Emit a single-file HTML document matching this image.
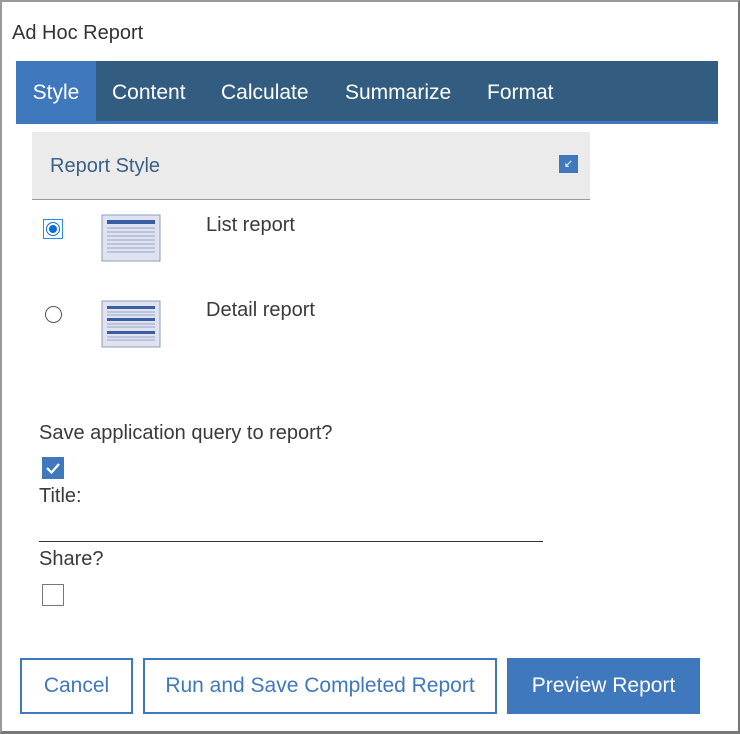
<!DOCTYPE html>
<html><head><style>
body{margin:0;width:740px;height:734px;background:#fff;font-family:"Liberation Sans",sans-serif;position:relative;overflow:hidden}
.a{position:absolute}
.frame{left:0;top:0;border-top:2px solid #9a9a9a;border-left:2px solid #9a9a9a;border-right:2px solid #777;border-bottom:3px solid #777;box-sizing:border-box;width:740px;height:734px}
.tabs{left:16px;top:61px;width:702px;height:60px;background:#325d80;border-bottom:3px solid #3f78bd}
.tab{position:absolute;top:0;height:60px;line-height:64px;color:#fff;font-size:21px}
.t{color:#3a3a3a;font-size:20px}
.btn{top:658px;height:56px;box-sizing:border-box;border:2px solid #3f78bd;color:#3f78bd;font-size:21px;text-align:center;line-height:52px}
</style></head><body>
<div class="a frame"></div>
<div class="a t" style="left:12px;top:22px;color:#333">Ad Hoc Report</div>
<div class="a tabs">
<div class="tab" style="left:0;width:80px;background:#3f78bd;text-align:center">Style</div>
<div class="tab" style="left:96px">Content</div>
<div class="tab" style="left:205px">Calculate</div>
<div class="tab" style="left:329px">Summarize</div>
<div class="tab" style="left:471px">Format</div>
</div>
<div class="a" style="left:32px;top:132px;width:558px;height:67px;background:#ebebeb;border-bottom:1px solid #999"></div>
<div class="a" style="left:50px;top:155px;color:#3b5f85;font-size:20px">Report Style</div>
<div class="a" style="left:559px;top:155px;width:19px;height:18px;background:#3f78bd;color:#fff;font-size:11px;line-height:18px;text-align:center">↙</div>
<div class="a" style="left:43px;top:219px;width:20px;height:20px;border:1px solid #2a8bea;box-sizing:border-box;background:#fff"></div>
<div class="a" style="left:46px;top:222px;width:14px;height:14px;border-radius:50%;border:1px solid #0a6cd8;box-sizing:border-box"></div>
<div class="a" style="left:49px;top:225px;width:8px;height:8px;border-radius:50%;background:#0a6cd8"></div>
<div class="a" style="left:45px;top:306px;width:17px;height:17px;border-radius:50%;border:1px solid #555;box-sizing:border-box"></div>
<svg class="a" style="left:101px;top:214px" width="62" height="50"><rect x="1" y="1" width="58" height="46" fill="#dfe3ef" stroke="#8f9cb8"/><rect x="6" y="6" width="48" height="4" fill="#3a5ea6"/><g stroke="#9aa6c8"><line x1="6" y1="14" x2="54" y2="14"/><line x1="6" y1="18" x2="54" y2="18"/><line x1="6" y1="22" x2="54" y2="22"/><line x1="6" y1="26" x2="54" y2="26"/><line x1="6" y1="30" x2="54" y2="30"/><line x1="6" y1="34" x2="54" y2="34"/><line x1="6" y1="38" x2="54" y2="38"/></g></svg>
<svg class="a" style="left:101px;top:300px" width="62" height="50"><rect x="1" y="1" width="58" height="46" fill="#dfe3ef" stroke="#8f9cb8"/><rect x="6" y="6" width="48" height="3" fill="#3a5ea6"/><rect x="6" y="18" width="48" height="3" fill="#3a5ea6"/><rect x="6" y="31" width="48" height="3" fill="#3a5ea6"/><g stroke="#9aa6c8"><line x1="6" y1="12" x2="54" y2="12"/><line x1="6" y1="15" x2="54" y2="15"/><line x1="6" y1="24" x2="54" y2="24"/><line x1="6" y1="27" x2="54" y2="27"/><line x1="6" y1="37" x2="54" y2="37"/><line x1="6" y1="40" x2="54" y2="40"/></g></svg>
<div class="a t" style="left:206px;top:214px">List report</div>
<div class="a t" style="left:206px;top:299px">Detail report</div>
<div class="a t" style="left:39px;top:422px">Save application query to report?</div>
<div class="a" style="left:42px;top:457px;width:22px;height:22px;background:#3f78bd"></div>
<svg class="a" style="left:42px;top:457px" width="22" height="22"><path d="M5 11 L9.5 15.5 L17 7" stroke="#fff" stroke-width="2.2" fill="none"/></svg>
<div class="a t" style="left:39px;top:485px">Title:</div>
<div class="a" style="left:39px;top:541px;width:504px;height:1px;background:#333"></div>
<div class="a t" style="left:39px;top:548px">Share?</div>
<div class="a" style="left:42px;top:584px;width:22px;height:22px;border:1px solid #777;box-sizing:border-box"></div>
<div class="a btn" style="left:20px;width:113px">Cancel</div>
<div class="a btn" style="left:143px;width:354px">Run and Save Completed Report</div>
<div class="a btn" style="left:507px;width:193px;background:#3f78bd;color:#fff">Preview Report</div>
</body></html>
